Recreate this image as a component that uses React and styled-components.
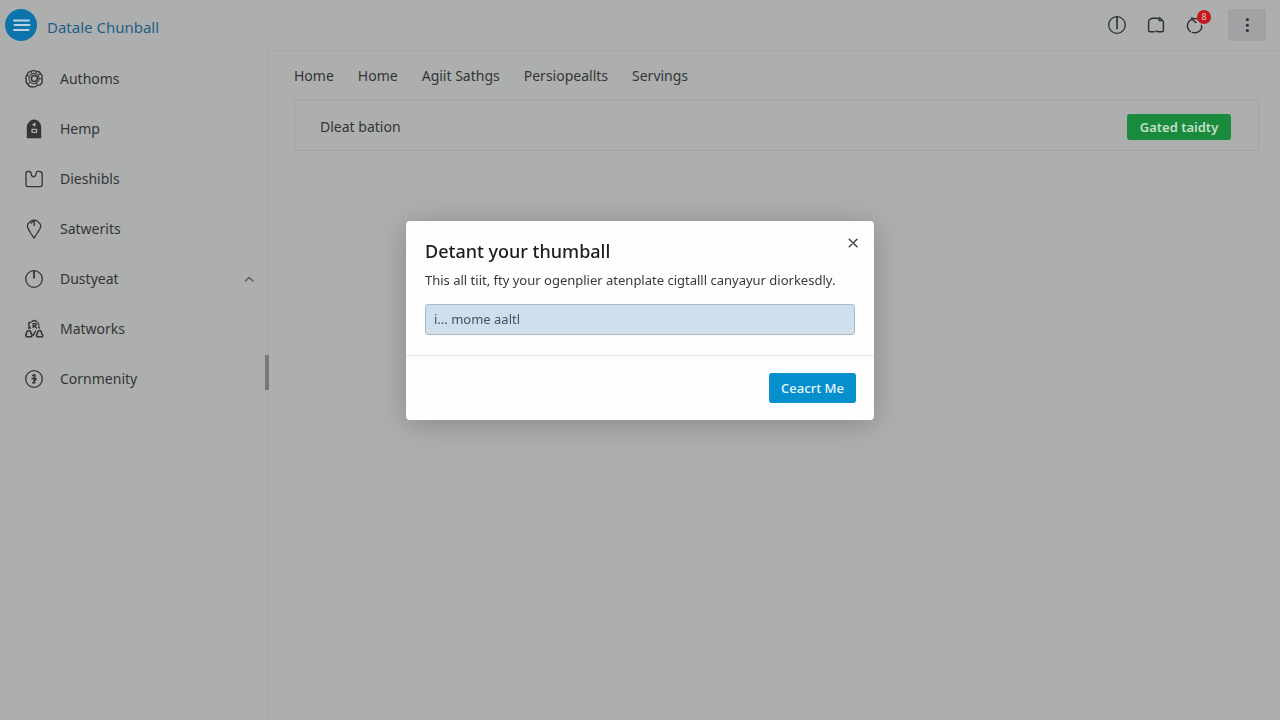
import React from "react";
import styled, { createGlobalStyle, css } from "styled-components";

const Global = createGlobalStyle`
  *, *::before, *::after { box-sizing: border-box; }
  body {
    margin: 0;
    background: #adaeae;
    color: #333536;
    font-family: "Noto Sans", "Open Sans", sans-serif;
    font-size: 14px;
    line-height: 20px;
  }
  button, input { font: inherit; color: inherit; }
`;

const Page = styled.div`
  min-height: 100vh;
  display: flex;
  flex-direction: column;
`;

const Header = styled.header`
  height: 50px;
  padding: 0 14px 0 5px;
  display: flex;
  align-items: center;
  justify-content: space-between;
`;

const Brand = styled.a`
  display: flex;
  align-items: center;
  gap: 10px;
  color: #1f5f86;
  font-size: 15px;
  line-height: 20px;
  text-decoration: none;
`;

const BrandName = styled.span`
  padding-top: 3px;
`;

const Logo = styled.svg`
  width: 32px;
  height: 32px;
  display: block;
`;

const Actions = styled.div`
  display: flex;
  align-items: center;
  gap: 23px;
`;

const IconGroup = styled.div`
  display: flex;
  align-items: center;
  gap: 19px;
`;

const IconButton = styled.button`
  position: relative;
  display: grid;
  place-items: center;
  width: ${(p) => (p.$filled ? "38px" : "20px")};
  height: ${(p) => (p.$filled ? "32px" : "20px")};
  padding: 0;
  border: 0;
  border-radius: 2px;
  background: ${(p) => (p.$filled ? "#a1a2a3" : "transparent")};
  color: #2c3036;
`;

const Badge = styled.span`
  position: absolute;
  top: -5px;
  right: -6px;
  width: 14px;
  height: 14px;
  border-radius: 50%;
  background: #c4181f;
  color: #e6c3c3;
  font-size: 9px;
  line-height: 14px;
  text-align: center;
`;

const Glyph = styled.svg`
  width: 20px;
  height: 20px;
  flex: none;
  display: block;
  fill: none;
  stroke: currentColor;
  stroke-width: 1.3;
  stroke-linecap: round;
  stroke-linejoin: round;
`;

const Body = styled.div`
  flex: 1;
  display: flex;
`;

const Sidebar = styled.nav`
  position: relative;
  flex: none;
  width: 268px;
  padding-top: 4px;
  border-right: 1px solid #a3a4a4;
`;

const NavList = styled.ul`
  margin: 0;
  padding: 0;
  list-style: none;
`;

const NavLink = styled.a`
  display: flex;
  align-items: center;
  gap: 16px;
  height: 50px;
  padding: 0 8px 0 24px;
  color: inherit;
  text-decoration: none;
`;

const NavLabel = styled.span`
  flex: 1;
`;

const ScrollThumb = styled.div`
  position: absolute;
  top: 305px;
  right: -2px;
  width: 4px;
  height: 35px;
  background: #77797a;
`;

const Main = styled.main`
  flex: 1;
  min-width: 0;
  padding: 15px 21px 24px 26px;
  border-top: 1px solid #a5a6a6;
`;

const Tabs = styled.nav`
  display: flex;
  gap: 24px;
  margin-bottom: 13px;
`;

const Tab = styled.a`
  color: inherit;
  text-decoration: none;
`;

const Card = styled.section`
  display: flex;
  align-items: center;
  justify-content: space-between;
  height: 52px;
  padding: 3px 27px 0 25px;
  border: 1px solid #a2a4a5;
`;

const ActionButton = styled.button`
  border: 0;
  border-radius: 3px;
  text-align: center;
  padding: 0;
  font-size: 13px;
  line-height: 20px;
  ${(p) =>
    p.$tone === "success"
      ? css`
          width: 104px;
          height: 26px;
          font-weight: 600;
          background: #1a8a3d;
          color: #c3dfca;
        `
      : css`
          width: 87px;
          height: 30px;
          font-weight: 500;
          background: #058fcd;
          color: #e9f6fc;
        `}
`;

const Overlay = styled.div`
  position: fixed;
  inset: 0;
  display: flex;
  align-items: flex-start;
  justify-content: center;
  padding: 221px 16px 16px;
`;

const Dialog = styled.section`
  width: 468px;
  max-width: 100%;
  border-radius: 4px;
  background: #fdfdfd;
  box-shadow: 0 4px 28px rgba(0, 0, 0, 0.22);
`;

const DialogBody = styled.div`
  padding: 16px 19px 20px;
`;

const DialogHead = styled.div`
  display: flex;
  align-items: flex-start;
  justify-content: space-between;
`;

const DialogTitle = styled.h2`
  margin: 0;
  color: #1c1d1e;
  font-size: 18px;
  line-height: 28px;
  font-weight: 500;
`;

const CloseButton = styled.button`
  display: grid;
  place-items: center;
  width: 20px;
  height: 20px;
  margin-right: -8px;
  margin-top: -4px;
  padding: 0;
  border: 0;
  background: transparent;
  color: #3a3c3e;
`;

const Description = styled.label`
  display: block;
  margin: 5px 0 14px;
  color: #37393b;
  font-size: 13px;
  line-height: 20px;
`;

const TextInput = styled.input`
  display: block;
  width: 100%;
  height: 31px;
  padding: 0 8px 2px;
  border: 1px solid #a9bccb;
  border-radius: 3px;
  background: #d0dfec;
  color: #46525e;
  font-size: 13px;
`;

const DialogFoot = styled.div`
  display: flex;
  justify-content: flex-end;
  padding: 17px 18px;
  border-top: 1px solid #e6e7e8;
`;

const shapes = {
  gear: (
    <>
      <circle cx="10.4" cy="9.6" r="3" strokeWidth="1.5" />
      <path d="M6.6 5.4Q10 3 13.6 5.2Q16 8 14.8 11.6Q13 15.2 9.4 14.8Q5.2 14 4.8 10.2Q4.8 7 6.6 5.4Z" strokeWidth="1" />
      <path d="M6.8 2.4Q10 .8 12.4 2.6Q15.8 2 16.4 4.8Q18.6 5.4 18 9.4Q18.8 13 17.6 14.4Q16.4 16.6 13.4 16.4Q11 18.8 8.2 17.6Q5 18.4 4.2 15.4Q1.4 14 2.2 11Q1 8 3.2 6Q3.4 3 6.8 2.4Z" />
      <path d="M6.8 2.4 8.4 5M12.4 2.6 11.4 5M16.4 4.8 14 6.6M18 9.8H15.2M13.4 16.4 12.4 13.8M4.2 15.4 6.4 13M3.2 6 5.6 8" strokeWidth="1" />
    </>
  ),
  tag: (
    <>
      <path d="M2.8 19.2V8Q2.8 4.8 5.2 2.8Q7.4 .6 10 .6Q13 .6 15 2.8Q17.2 4.8 17.2 8V19.2Z" fill="currentColor" stroke="none" />
      <path d="M10.8 4.4V6.8M9.2 5.2V6" stroke="#adaeae" strokeWidth="1.6" />
      <path d="M8 10.4H12.6M8.4 13.4H12.4M8 10.4V13M12.6 11V13" stroke="#adaeae" strokeWidth="1.3" />
    </>
  ),
  folder: (
    <path d="M3.5 2.5H5.4Q7 2.5 7.2 5.2Q7.6 7.8 9.6 7.8Q11.8 7.6 12 4.8Q12.2 2.5 13.8 2.3H15.4Q18.2 2.6 18.2 5V15.6Q18.2 17.6 16.4 17.6H3.8Q2 17.6 2 15.8V4.2Q2 2.5 3.5 2.5Z" />
  ),
  pin: (
    <>
      <path d="M10 19Q8 16.4 6 13Q3.4 9.4 3.4 6.8Q3.4 4.4 5.6 3.4Q7.4 1.2 10 1.2Q12.8 1.2 14.4 3.2Q16.8 4.6 16.8 7Q16.6 9.4 14 13Q12 16.4 10 19Z" />
      <path d="M10.2 1.4V6.6M7.2 4 9.6 2" />
    </>
  ),
  clock: (
    <>
      <circle cx="10" cy="10" r="8.3" />
      <path d="M10 2V8.8" strokeWidth="1.8" />
    </>
  ),
  alert: (
    <>
      <circle cx="10" cy="10" r="8.3" />
      <path d="M10 2V13.8" strokeWidth="1.6" />
    </>
  ),
  people: (
    <>
      <path d="M2.4 17.8 1.8 15.6Q2.6 14.8 2.8 12.8Q4.6 10.4 6.6 12.6Q6.8 14.8 8 15.6L7.6 17.8ZM13 17.8 12.4 15.6Q13.6 14.8 13.8 12.8Q15.6 10.4 17.2 12.6Q17.4 14.8 18.8 16L18.4 17.8Z" strokeWidth="1.6" />
      <path d="M7 3.2 4.8 4V7M5.4 7V9M4.4 9H6.4M8.2 2.4Q10.8 .6 12.6 2.6M9.2 4.6V8.6M9.2 4.8Q12.6 3.6 12.2 6Q11.4 7 9.6 6.8L12.6 9M14 3.6 14.8 6M14.6 7.8 15.6 9M9.2 16.4 11.4 12.2" strokeWidth="1.4" />
    </>
  ),
  coin: (
    <>
      <circle cx="10" cy="10" r="8.3" />
      <path d="M8.6 6.8Q10 4.8 11.2 6.4Q11.4 8 9.6 9.2M8 9.8H12Q11.6 11.8 9.8 12.2M10.4 9V14M8.6 13.8H10.8" strokeWidth="1.5" />
    </>
  ),
  up: <path d="M6.4 12 10 8.6 14 11.8" strokeWidth="1.6" stroke="#626465" />,
  box: (
    <path d="M8.2 16.8H4.4Q2.6 16.8 2.6 15V6.8Q2.6 4.8 4.4 4.2Q5.4 3.2 7 3.2H11Q12.6 3.2 13.4 4.8M13.4 2.6 16.6 5.6M13.2 5.6H16.4Q17.4 6.2 17.4 7.6V15.4Q17.4 16.8 15.8 16.8H11.4M10.2 15.8V16.6" strokeWidth="1.4" />
  ),
  bell: (
    <path d="M7 4.2 11 7.6M6.6 2.8 9.8 3.8M7 4.2Q2.4 6.6 2.4 11Q2.6 14.6 5.4 16.4M7.2 17.4Q13 18.8 16 14.4Q17.2 12.4 16.4 10.4M9.8 3.8Q12.8 3.2 14 5.2" strokeWidth="1.4" />
  ),
  dots: (
    <g fill="currentColor" stroke="none">
      <circle cx="10.4" cy="4.6" r="1.5" />
      <circle cx="10.4" cy="10.2" r="1.5" />
      <circle cx="10.4" cy="15.6" r="1.5" />
    </g>
  ),
  close: <path d="M6.2 6.2 14 13.8M14 6.2 6.2 13.8" strokeWidth="1.4" />,
};

const Icon = ({ name }) => (
  <Glyph viewBox="0 0 20 20" aria-hidden="true">
    {shapes[name]}
  </Glyph>
);

const navItems = [
  { icon: "gear", label: "Authoms" },
  { icon: "tag", label: "Hemp" },
  { icon: "folder", label: "Dieshibls" },
  { icon: "pin", label: "Satwerits" },
  { icon: "clock", label: "Dustyeat", expanded: true },
  { icon: "people", label: "Matworks" },
  { icon: "coin", label: "Cornmenity" },
];

const tabs = ["Home", "Home", "Agiit Sathgs", "Persiopeallts", "Servings"];

export default function App() {
  return (
    <>
      <Global />
      <Page>
        <Header>
          <Brand href="#">
            <Logo viewBox="0 0 32 32" aria-hidden="true">
              <circle cx="16" cy="16" r="16" fill="#0d74ab" />
              <path d="M9 11.5H24M9.5 16H24.5M9 21H23.5" stroke="#b9d3e0" strokeWidth="2" strokeLinecap="round" />
            </Logo>
            <BrandName>Datale Chunball</BrandName>
          </Brand>
          <Actions>
            <IconGroup>
              <IconButton aria-label="Alerts">
                <Icon name="alert" />
              </IconButton>
              <IconButton aria-label="Files">
                <Icon name="box" />
              </IconButton>
              <IconButton aria-label="Notifications">
                <Icon name="bell" />
                <Badge>8</Badge>
              </IconButton>
            </IconGroup>
            <IconButton $filled aria-label="More">
              <Icon name="dots" />
            </IconButton>
          </Actions>
        </Header>
        <Body>
          <Sidebar>
            <NavList>
              {navItems.map((item) => (
                <li key={item.label}>
                  <NavLink href="#">
                    <Icon name={item.icon} />
                    <NavLabel>{item.label}</NavLabel>
                    {item.expanded && <Icon name="up" />}
                  </NavLink>
                </li>
              ))}
            </NavList>
            <ScrollThumb />
          </Sidebar>
          <Main>
            <Tabs>
              {tabs.map((label, i) => (
                <Tab href="#" key={i}>
                  {label}
                </Tab>
              ))}
            </Tabs>
            <Card>
              <span>Dleat bation</span>
              <ActionButton $tone="success">Gated taidty</ActionButton>
            </Card>
          </Main>
        </Body>
      </Page>
      <Overlay>
        <Dialog role="dialog" aria-modal="true" aria-labelledby="dialog-title">
          <DialogBody>
            <DialogHead>
              <DialogTitle id="dialog-title">Detant your thumball</DialogTitle>
              <CloseButton aria-label="Close">
                <Icon name="close" />
              </CloseButton>
            </DialogHead>
            <Description htmlFor="name">
              This all tiit, fty your ogenplier atenplate cigtalll canyayur diorkesdly.
            </Description>
            <TextInput id="name" type="text" defaultValue="i... mome aaltl" />
          </DialogBody>
          <DialogFoot>
            <ActionButton>Ceacrt Me</ActionButton>
          </DialogFoot>
        </Dialog>
      </Overlay>
    </>
  );
}
